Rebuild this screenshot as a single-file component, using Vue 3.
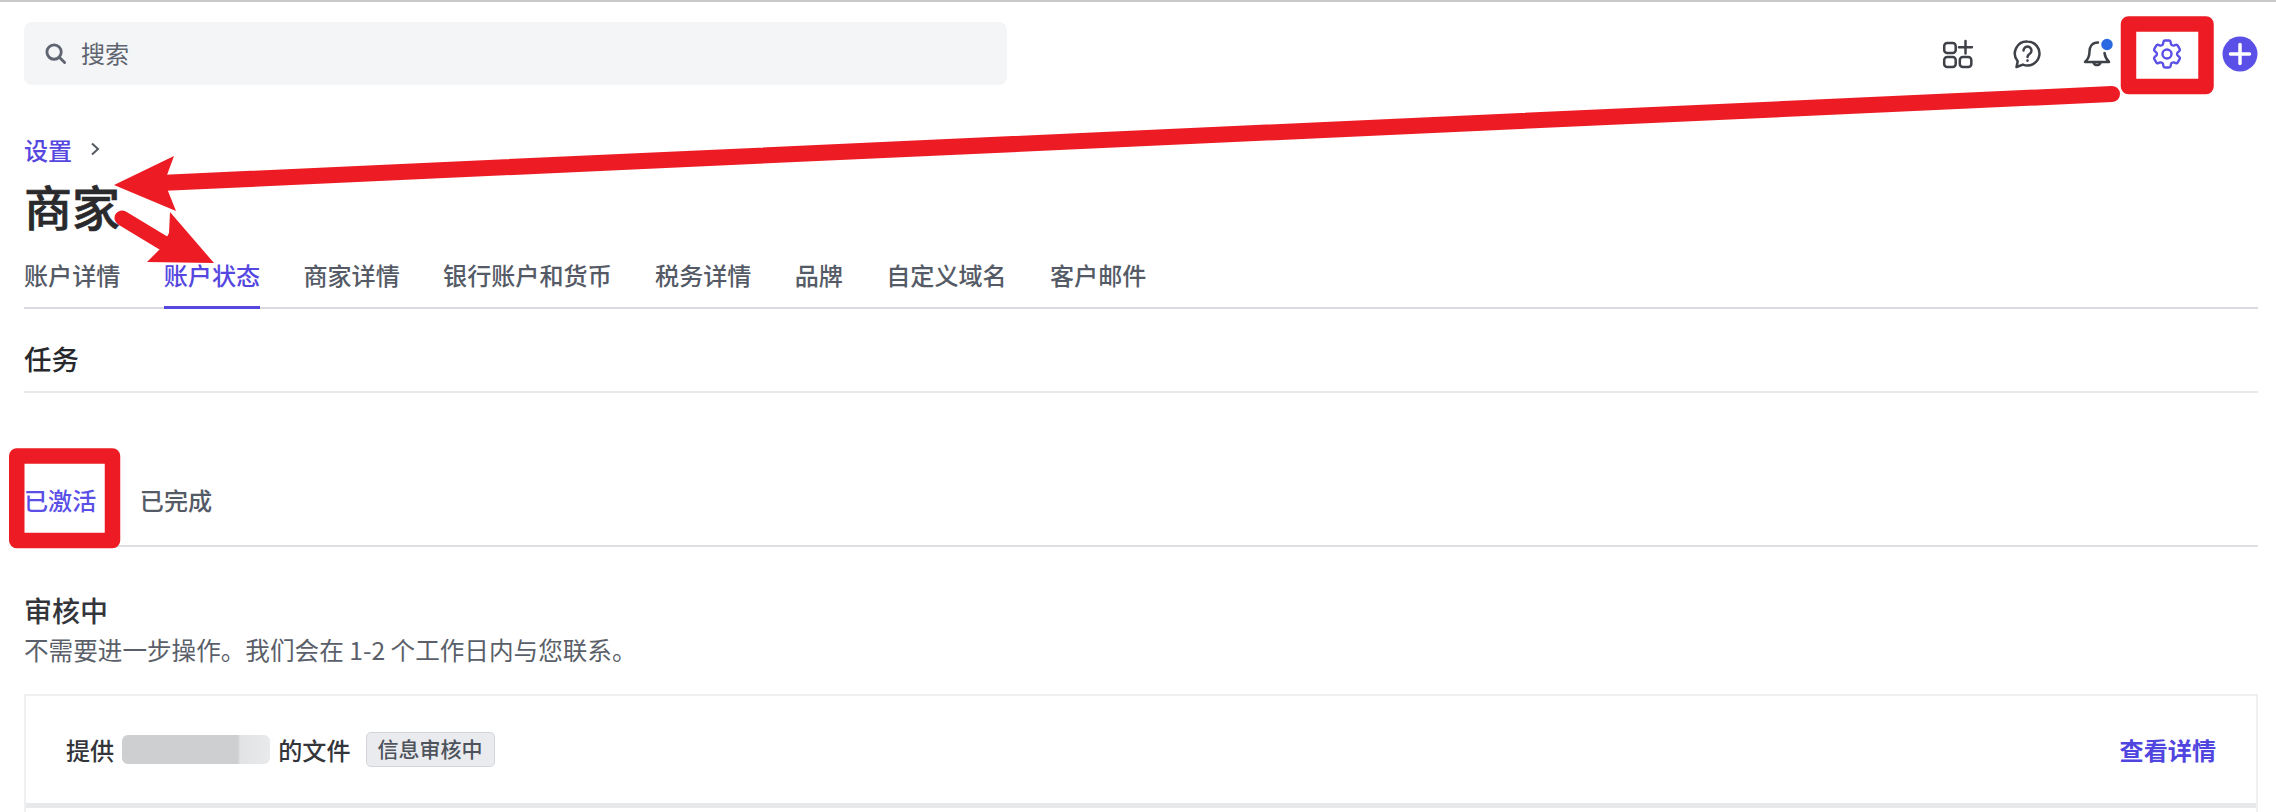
<template>
  <div class="page">
    <header class="topbar">
      <div class="search">
        <svg class="search-icon" viewBox="0 0 22 22" fill="none">
          <circle cx="9.5" cy="9.5" r="7.5" />
          <path d="M15 15l5.5 5.5" />
        </svg>
        <span class="search-text">搜索</span>
      </div>
      <div class="actions">
        <svg class="icon" viewBox="0 0 32 32" fill="none">
          <rect x="3.200" y="5" width="11.500" height="10" rx="3" />
          <rect x="3.200" y="19" width="11.500" height="10" rx="3" />
          <rect x="18.800" y="19" width="11.500" height="10" rx="3" />
          <path d="M24.500 3v12.500M18 9.200h13" />
        </svg>
        <svg class="icon" viewBox="0 0 32 32" fill="none">
          <path d="M16.500 3.500a12 12 0 1 1-4.600 23.100L5.500 29l1.200-5.800A12 12 0 0 1 16.500 3.500z" />
          <path d="M12.500 12.500a4 4 0 1 1 6 3.500c-1.300.8-2 1.600-2 3" />
          <circle class="dot" cx="16.500" cy="22.600" r="1.300" />
        </svg>
        <svg class="icon" viewBox="0 0 32 32" fill="none">
          <path d="M17 4.500c-6 0-8.500 4.500-8.500 9 0 5-1.500 8-4.500 10.500h24c-2.500-2.500-4-5-4.500-9" />
          <path d="M12.500 24.500a3.700 3.700 0 0 0 7 0" />
          <circle class="bell-dot" cx="26" cy="6.500" r="6.500" />
        </svg>
        <span class="gear-slot">
          <svg class="icon gear" viewBox="2 2 20 20" fill="none">
            <path d="M9.594 3.94c.09-.542.56-.94 1.11-.94h2.593c.55 0 1.02.398 1.11.94l.213 1.281c.063.374.313.686.645.87.074.04.147.083.22.127.325.196.72.257 1.075.124l1.217-.456a1.125 1.125 0 0 1 1.37.49l1.296 2.247a1.125 1.125 0 0 1-.26 1.431l-1.003.827c-.293.241-.438.613-.43.992a7.723 7.723 0 0 1 0 .255c-.008.378.137.75.43.991l1.004.827c.424.35.534.955.26 1.43l-1.298 2.247a1.125 1.125 0 0 1-1.369.491l-1.217-.456c-.355-.133-.75-.072-1.076.124a6.47 6.47 0 0 1-.22.128c-.331.183-.581.495-.644.869l-.213 1.281c-.09.543-.56.94-1.11.94h-2.594c-.55 0-1.019-.398-1.11-.94l-.213-1.281c-.062-.374-.312-.686-.644-.87a6.52 6.52 0 0 1-.22-.127c-.325-.196-.72-.257-1.076-.124l-1.217.456a1.125 1.125 0 0 1-1.369-.49l-1.297-2.247a1.125 1.125 0 0 1 .26-1.431l1.004-.827c.292-.24.437-.613.43-.991a6.932 6.932 0 0 1 0-.255c.007-.38-.138-.751-.43-.992l-1.004-.827a1.125 1.125 0 0 1-.26-1.43l1.297-2.247a1.125 1.125 0 0 1 1.37-.491l1.216.456c.356.133.751.072 1.076-.124.072-.044.146-.086.22-.128.332-.183.582-.495.644-.869l.214-1.28Z" />
            <circle cx="12" cy="12" r="3" />
          </svg>
        </span>
        <svg class="plus" viewBox="0 0 36 36">
          <circle cx="18" cy="18" r="17.500" />
          <path d="M18 8.500v19M8.500 18h19" />
        </svg>
      </div>
    </header>

    <nav class="crumb">
      <a>设置</a>
      <svg viewBox="0 0 10 14" fill="none"><path d="M2 1.500L8 7l-6 5.500" /></svg>
    </nav>
    <h1 class="title">商家</h1>

    <div class="tabs">
      <span
        v-for="tab in tabs"
        :key="tab"
        class="tab"
        :class="{ active: tab === '账户状态' }"
      >{{ tab }}</span>
    </div>

    <h2 class="section">任务</h2>

    <div class="subtabs">
      <span class="active">已激活</span>
      <span>已完成</span>
    </div>

    <h3 class="group">审核中</h3>
    <p class="desc">不需要进一步操作。我们会在 1-2 个工作日内与您联系。</p>

    <div class="card">
      <div class="row">
        <div class="row-title">
          <span>提供</span>
          <span class="smudge"></span>
          <span>的文件</span>
          <span class="badge">信息审核中</span>
        </div>
        <a class="link">查看详情</a>
      </div>
    </div>

    <!-- annotations painted on top of the screenshot -->
    <svg class="marks" viewBox="0 0 2276 812" fill="none">
      <rect class="box" x="2128.500" y="24" width="77.500" height="62.500" />
      <rect class="box" x="16.750" y="456" width="95.750" height="84.500" />
      <path class="line" d="M2112 94L160 183" />
      <path class="head" d="M114 185L174 156L167 175L168 191L176 211Z" />
      <path class="line thin" d="M122 218L170 247" />
      <path class="head" d="M214 263L170 212L169 233L161 248L147 262Z" />
    </svg>
  </div>
</template>

<script setup>
const tabs = ['账户详情', '账户状态', '商家详情', '银行账户和货币', '税务详情', '品牌', '自定义域名', '客户邮件']
</script>

<style>
html,
body {
  margin: 0;
  background: #fff;
  overflow: hidden;
}
</style>

<style scoped>
.page {
  position: relative;
  width: 2276px;
  height: 812px;
  box-sizing: border-box;
  padding: 0 18px 0 24px;
  overflow: hidden;
  border-top: 2px solid #c9c9c9;
  background: #fff;
  color: #2b2d31;
  font-family: "Noto Sans CJK SC", "Noto Sans", sans-serif;
  font-size: 24.100px;
}

.topbar {
  display: flex;
  justify-content: space-between;
  align-items: center;
  margin-top: 20px;
  height: 63px;
}

.search {
  display: flex;
  align-items: center;
  gap: 15px;
  width: 983px;
  height: 63px;
  box-sizing: border-box;
  padding-left: 21px;
  border-radius: 8px;
  background: #f4f5f7;
  color: #5f6570;
}

.search-text {
  margin-top: -3px;
}

.search-icon {
  width: 21px;
  height: 21px;
  stroke: #5f6570;
  stroke-width: 3;
  stroke-linecap: round;
}

.actions {
  display: flex;
  align-items: center;
  gap: 38px;
}

.icon {
  width: 32px;
  height: 32px;
  stroke: #3e4147;
  stroke-width: 2.500;
  stroke-linecap: round;
  stroke-linejoin: round;
}

.icon .dot {
  fill: #3e4147;
  stroke: none;
}

.icon .bell-dot {
  fill: #2a69e2;
  stroke: #fff;
  stroke-width: 1.500;
}

.gear-slot {
  display: flex;
  justify-content: center;
  align-items: center;
  width: 32px;
  height: 32px;
}

.gear {
  width: 30px;
  height: 30px;
  stroke: #5a4fe6;
  stroke-width: 1.600;
}

.plus {
  width: 36px;
  height: 36px;
  margin-left: 1px;
}

.plus circle {
  fill: #5a4fe6;
}

.plus path {
  stroke: #fff;
  stroke-width: 3.500;
  stroke-linecap: round;
}

.crumb {
  display: flex;
  align-items: center;
  gap: 18px;
  margin-top: 47px;
  height: 34px;
  color: #5547e0;
  font-weight: 500;
}

.crumb svg {
  width: 10px;
  height: 14px;
  stroke: #555a62;
  stroke-width: 2;
}

.title {
  margin: 9px 0 0;
  height: 60px;
  color: #2a2a2d;
  font-size: 48px;
  font-weight: 500;
  line-height: 60px;
  -webkit-text-stroke: 0.6px #2a2a2d;
}

.tabs {
  display: flex;
  gap: 43.300px;
  margin-top: 23px;
  border-bottom: 2px solid #d9dadd;
}

.tab {
  height: 48px;
  line-height: 34px;
  color: #555b66;
  font-weight: 500;
}

.tab.active {
  margin-bottom: -2px;
  border-bottom: 3px solid #5547e0;
  color: #5547e0;
}

.section {
  margin: 31px 0 0;
  padding-bottom: 15px;
  border-bottom: 2px solid #e8e9eb;
  font-size: 27.500px;
  font-weight: 500;
  line-height: 36px;
  color: #26282c;
}

.subtabs {
  display: flex;
  gap: 43.500px;
  margin-top: 90px;
  padding-bottom: 28px;
  border-bottom: 2px solid #dedfe2;
  line-height: 34px;
  color: #555b66;
  font-weight: 500;
}

.subtabs .active {
  color: #5a4fe6;
}

.group {
  margin: 45px 0 0;
  font-size: 28px;
  font-weight: 500;
  line-height: 36px;
  color: #33353a;
}

.desc {
  margin: 5px 0 0;
  font-size: 24.600px;
  line-height: 32px;
  color: #5a5f69;
}

.card {
  margin-top: 29px;
  border: 2px solid #eeeff1;
  height: 200px;
}

.row {
  display: flex;
  justify-content: space-between;
  align-items: center;
  box-sizing: border-box;
  height: 112px;
  padding: 0 40px;
  border-bottom: 5px solid #e8e9eb;
}

.row-title {
  display: flex;
  align-items: center;
  gap: 8px;
  color: #33353a;
  font-weight: 500;
}

.smudge {
  width: 148px;
  height: 29px;
  border-radius: 6px;
  background: linear-gradient(90deg, #cdcfd1 0%, #cdcfd1 78%, #e1e3e5 80%, #e9eaec 100%);
}

.badge {
  margin-left: 7px;
  padding: 0 11px;
  height: 35px;
  box-sizing: border-box;
  border: 1px solid #d2d5da;
  border-radius: 5px;
  background: #e9ebee;
  color: #4e535c;
  font-size: 21px;
  line-height: 31px;
}

.link {
  color: #5145e0;
  font-weight: 600;
}

.marks {
  position: absolute;
  top: -2px;
  left: 0;
  width: 2276px;
  height: 812px;
  pointer-events: none;
}

.box {
  stroke: #ed1c24;
  stroke-width: 15.500;
  stroke-linejoin: round;
}

.line {
  stroke: #ed1c24;
  stroke-width: 16;
  stroke-linecap: round;
}

.line.thin {
  stroke-width: 15;
}

.head {
  fill: #ed1c24;
}
</style>
